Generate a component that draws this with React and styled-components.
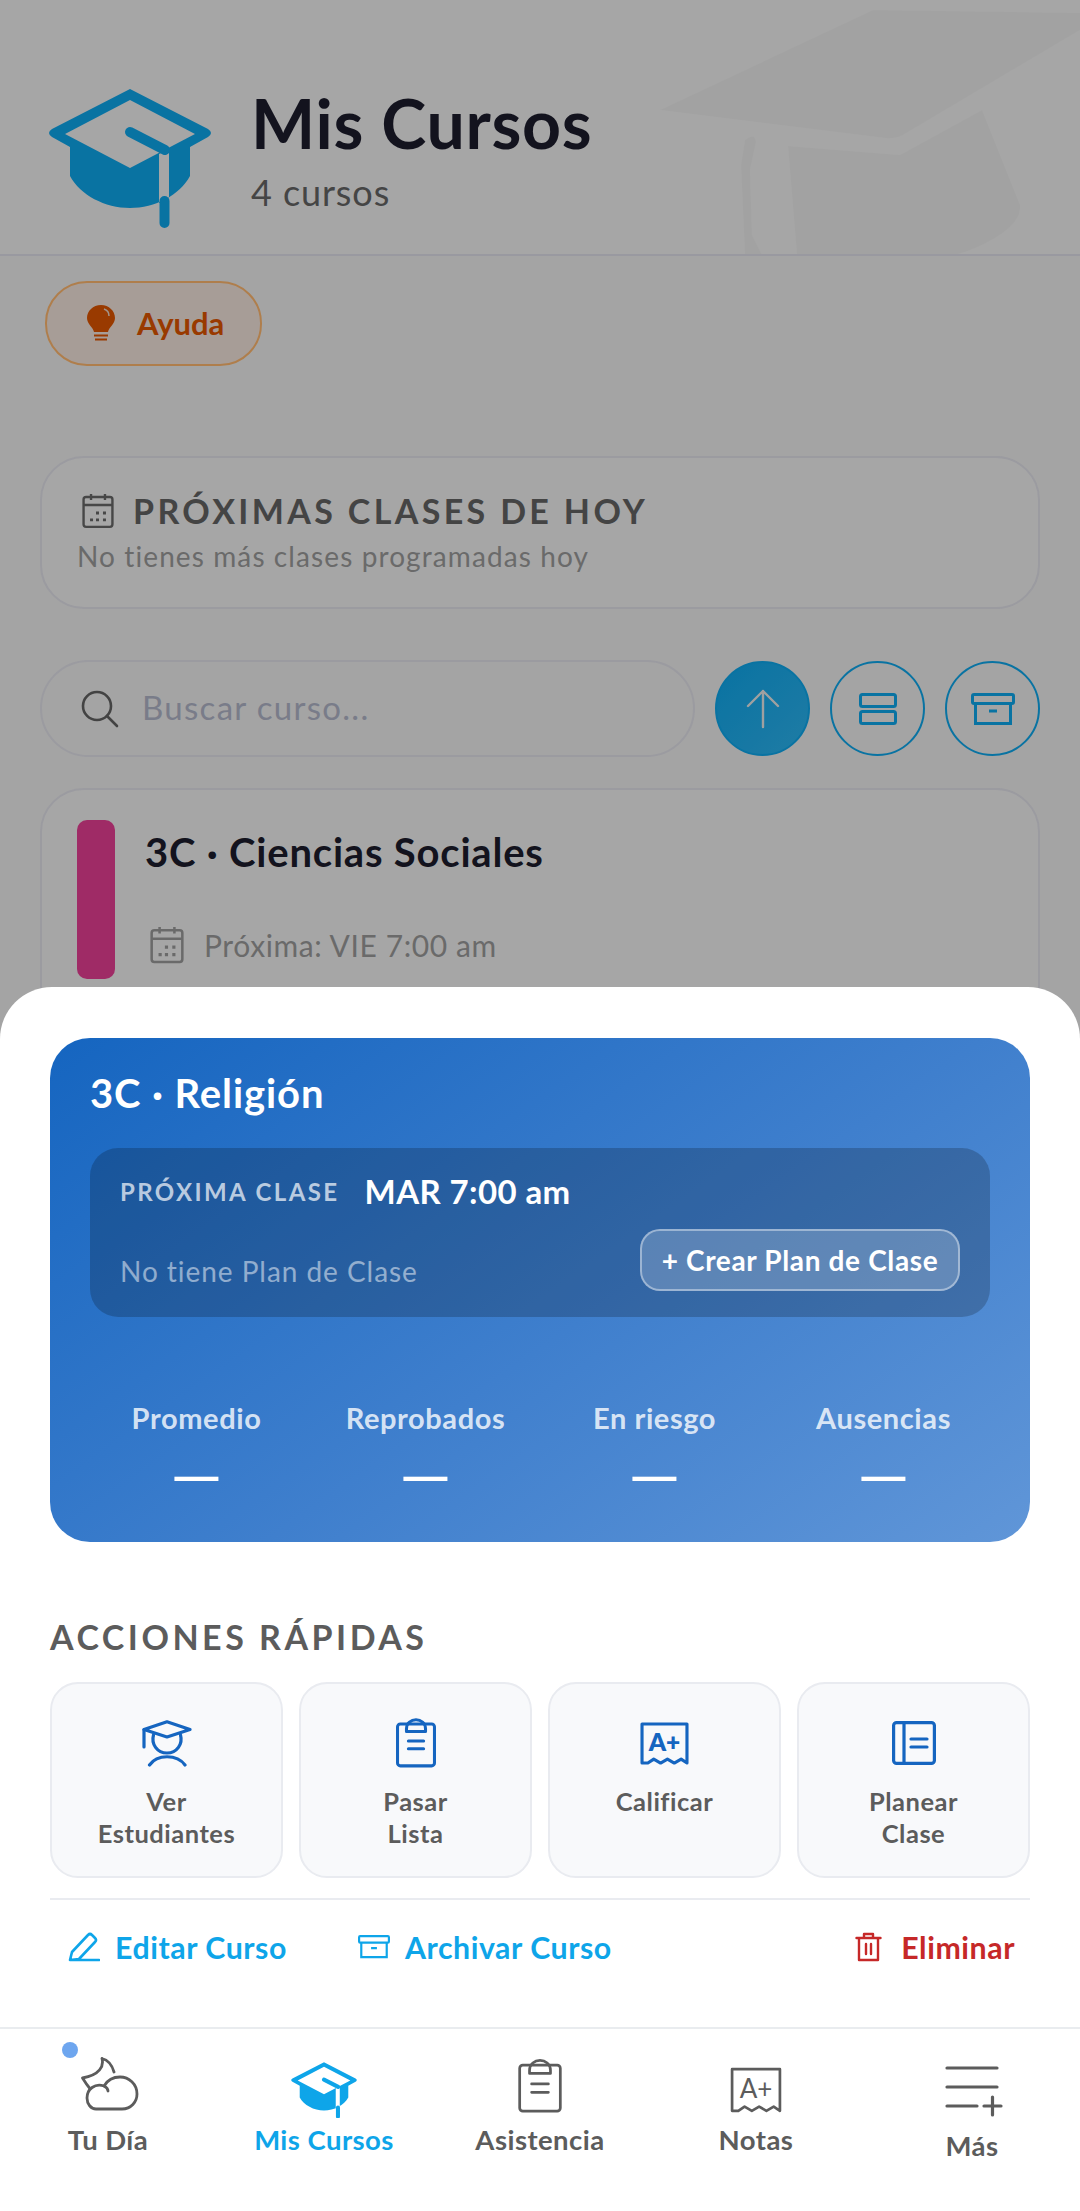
import React from "react";
import styled, { createGlobalStyle } from "styled-components";

const Global = createGlobalStyle`
  html, body { margin: 0; padding: 0; background: #ebebeb; }
  * { box-sizing: border-box; }
  body { font-family: Lato, "Noto Sans", "Open Sans", sans-serif; }
`;

const Screen = styled.div`
  position: relative;
  width: 1080px;
  height: 2211px;
  overflow: hidden;
  background: #ebebeb;
`;
const Header = styled.header`
  position: relative;
  height: 256px;
  display: flex;
  align-items: flex-start;
  gap: 37px;
  padding: 86px 0 0 46px;
  border-bottom: 2px solid #dcdce6;
  background: #eeeeee;
  overflow: hidden;
`;
const Watermark = styled.svg`
  position: absolute;
  top: 0;
  left: 640px;
  width: 440px;
  height: 255px;
`;
const HeaderText = styled.div`
  margin-top: -3px;
  display: flex;
  flex-direction: column;
  gap: 4px;
`;
const Title = styled.h1`
  margin: 0;
  font-size: 68px;
  line-height: 80px;
  font-weight: 700;
  color: #1c1c2c;
  letter-spacing: 0.7px;
`;
const Subtitle = styled.div`
  font-size: 36px;
  line-height: 50px;
  color: #636363;
  letter-spacing: 0.9px;
`;
const Body = styled.main`
  padding: 25px 40px 0;
  display: flex;
  flex-direction: column;
  align-items: stretch;
`;
const HelpButton = styled.button`
  align-self: flex-start;
  margin-left: 5px;
  width: 217px;
  height: 85px;
  display: flex;
  align-items: center;
  gap: 22px;
  padding: 0 0 2px 40px;
  border: 2px solid #fbb56d;
  border-radius: 42px;
  background: #efe1d9;
  color: #dc5400;
  font: 700 31px Lato, sans-serif;
`;
const Card = styled.section`
  border: 2px solid #dedee6;
  border-radius: 44px;
  background: #eeeeee;
`;
const UpcomingCard = styled(Card)`
  margin-top: 90px;
  height: 153px;
  padding: 31px 0 0 35px;
`;
const UpcomingHead = styled.div`
  display: flex;
  align-items: center;
  gap: 19px;
  padding-left: 5px;
  color: #666;
`;
const UpcomingTitle = styled.h2`
  margin: 0;
  font-size: 34px;
  line-height: 44px;
  font-weight: 700;
  letter-spacing: 3.35px;
  color: #626262;
`;
const Muted = styled.div`
  margin-top: 5px;
  font-size: 28px;
  line-height: 36px;
  color: #999;
  letter-spacing: 1.1px;
`;
const Tools = styled.div`
  margin-top: 51px;
  display: flex;
  align-items: center;
  gap: 20px;
`;
const Search = styled.div`
  width: 655px;
  height: 97px;
  display: flex;
  align-items: center;
  gap: 23px;
  padding-left: 39px;
  border: 2px solid #dedee6;
  border-radius: 49px;
  color: #606060;
`;
const Placeholder = styled.span`
  padding-bottom: 4px;
  font-size: 33px;
  color: #aeb2c5;
  letter-spacing: 1.3px;
`;
const RoundButton = styled.button`
  width: 95px;
  height: 95px;
  flex: none;
  display: flex;
  align-items: center;
  justify-content: center;
  padding: 0;
  border-radius: 50%;
  border: 2px solid #0ea5e9;
  background: ${(p) => (p.$filled ? "linear-gradient(135deg,#0ea5e9,#2db2ec)" : "transparent")};
  color: ${(p) => (p.$filled ? "#e6e6e6" : "#0ea5e9")};
`;
const CourseCard = styled(Card)`
  margin-top: 31px;
  height: 260px;
  padding: 30px 35px;
  display: flex;
  gap: 30px;
  align-items: flex-start;
`;
const Stripe = styled.div`
  width: 38px;
  height: 159px;
  flex: none;
  border-radius: 10px;
  background: #e43e92;
`;
const CourseBody = styled.div`
  display: flex;
  flex-direction: column;
  padding-top: 8px;
`;
const CourseName = styled.div`
  font-size: 40px;
  line-height: 48px;
  font-weight: 700;
  color: #1c1c2c;
  letter-spacing: 0.8px;
`;
const CourseMeta = styled.div`
  margin-top: 50px;
  margin-left: 5px;
  display: flex;
  align-items: center;
  gap: 20px;
  font-size: 30px;
  color: #999;
  letter-spacing: 0.6px;
`;
const Scrim = styled.div`
  position: absolute;
  inset: 0;
  background: rgba(0, 0, 0, 0.3);
`;
const Dock = styled.div`
  position: absolute;
  left: 0;
  right: 0;
  bottom: 0;
  display: flex;
  flex-direction: column;
  background: #fff;
  border-radius: 52px 52px 0 0;
`;
const Sheet = styled.div`
  height: 1040px;
  padding: 51px 50px 0;
  display: flex;
  flex-direction: column;
`;
const Hero = styled.div`
  height: 504px;
  padding: 30px 40px 0;
  border-radius: 40px;
  color: #fff;
  background: linear-gradient(145deg, #1565c0 0%, #3f7fcd 55%, #6096d8 100%);
`;
const HeroTitle = styled.div`
  font-size: 40px;
  line-height: 50px;
  font-weight: 700;
  letter-spacing: 0.9px;
`;
const NextBox = styled.div`
  margin-top: 30px;
  height: 169px;
  padding: 22px 30px 25px;
  border-radius: 28px;
  background: rgba(0, 0, 0, 0.2);
`;
const NextRow = styled.div`
  display: flex;
  align-items: center;
  gap: 25px;
  height: 42px;
`;
const NextLabel = styled.span`
  font-size: 24px;
  font-weight: 700;
  letter-spacing: 2.4px;
  color: rgba(255, 255, 255, 0.7);
`;
const NextValue = styled.span`
  font-size: 33px;
  font-weight: 700;
  letter-spacing: 0.4px;
`;
const PlanRow = styled.div`
  margin-top: 17px;
  display: flex;
  justify-content: space-between;
  align-items: flex-end;
`;
const NoPlan = styled.span`
  font-size: 28px;
  line-height: 40px;
  color: rgba(255, 255, 255, 0.5);
  letter-spacing: 0.95px;
`;
const PlanButton = styled.button`
  width: 320px;
  height: 62px;
  padding: 0 0 1px;
  border-radius: 20px;
  border: 2px solid rgba(255, 255, 255, 0.4);
  background: rgba(255, 255, 255, 0.2);
  color: #fff;
  font: 700 28px Lato, sans-serif;
  letter-spacing: 0.65px;
`;
const Stats = styled.div`
  margin-top: 81px;
  display: grid;
  grid-template-columns: repeat(4, 1fr);
  gap: 16px;
  text-align: center;
`;
const StatLabel = styled.div`
  font-size: 29px;
  line-height: 40px;
  font-weight: 700;
  color: rgba(255, 255, 255, 0.8);
  letter-spacing: 0.6px;
`;
const StatValue = styled.div`
  margin-top: 15px;
  font-size: 66px;
  line-height: 40px;
  font-weight: 400;
`;
const SectionTitle = styled.h3`
  margin: 73px 0 0;
  font-size: 34px;
  line-height: 44px;
  font-weight: 700;
  letter-spacing: 3.5px;
  color: #5c5c5c;
`;
const ActionGrid = styled.div`
  margin-top: 23px;
  display: grid;
  grid-template-columns: repeat(4, 1fr);
  gap: 16px;
`;
const ActionCard = styled.button`
  height: 196px;
  padding: 34px 10px 0;
  display: flex;
  flex-direction: column;
  align-items: center;
  border: 2px solid #e9ebf0;
  border-radius: 28px;
  background: #f8f9fb;
  color: #1565c0;
`;
const ActionIcon = styled.div`
  height: 50px;
  margin-bottom: 17px;
  display: flex;
  align-items: center;
  justify-content: center;
`;
const ActionLabel = styled.span`
  font: 700 25.5px/32px Lato, sans-serif;
  color: #5c5c5c;
  letter-spacing: 0.5px;
  white-space: pre-line;
`;
const Divider = styled.hr`
  margin: 20px 0 0;
  border: 0;
  height: 2px;
  background: #e9ebf0;
`;
const LinkRow = styled.div`
  margin-top: 25px;
  padding: 0 15px 0 18px;
  display: flex;
  align-items: center;
  gap: 71px;
`;
const LinkAction = styled.button`
  height: 44px;
  display: flex;
  align-items: center;
  gap: ${(p) => p.$gap || 15}px;
  margin-left: ${(p) => (p.$end ? "auto" : "0")};
  padding: 0;
  border: 0;
  background: none;
  color: ${(p) => p.$color};
  font: 700 30.3px Lato, sans-serif;
  letter-spacing: 0.55px;
`;
const Nav = styled.nav`
  height: 184px;
  padding-top: 28px;
  display: grid;
  grid-template-columns: repeat(5, 216px);
  border-top: 2px solid #e9ecef;
  background: #fff;
`;
const NavItem = styled.div`
  position: relative;
  display: flex;
  flex-direction: column;
  align-items: center;
  color: ${(p) => (p.$active ? "#0ea5e9" : "#5c5c5c")};
`;
const NavIcon = styled.div`
  height: ${(p) => p.$h || 65}px;
  display: flex;
  align-items: ${(p) => p.$align || "center"};
  justify-content: center;
  padding-left: ${(p) => p.$shift || 0}px;
`;
const NavLabel = styled.span`
  font-size: 27.5px;
  line-height: 36px;
  font-weight: 700;
  letter-spacing: 0.45px;
`;
const Dot = styled.span`
  position: absolute;
  top: -15px;
  left: 62px;
  width: 16px;
  height: 16px;
  border-radius: 50%;
  background: #6ea6ef;
`;

const CapIcon = ({ w, color }) => (
  <svg width={w} height={(w * 143) / 168} viewBox="16 16 168 143" fill={color}>
    <path
      fillRule="evenodd"
      d="M100 19 L178 59 Q184 63 178 67 L160 77 V106 C150 125 125 138 100 138 C75 138 50 125 40 106 V77 L22 67 Q16 63 22 59 Z M100 30 L35 64 L100 98 L165 64 Z M129 84 L139 79 V128 L129 133 Z"
    />
    <path d="M100 62 L135 80 M134.500 131 V153" stroke={color} strokeWidth="10" strokeLinecap="round" fill="none" />
  </svg>
);
const CalendarIcon = ({ size = 32 }) => (
  <svg width={size} height={size * 1.12} viewBox="0 0 32 36" fill="none" stroke="currentColor" strokeWidth="2.4">
    <rect x="1.500" y="4" width="29" height="30" rx="2.500" />
    <path d="M1.500 12 H30.500 M9 1 V7 M23 1 V7" />
    <path d="M14 20h3M21 20h3M8 27h3M14 27h3M21 27h3" strokeWidth="3" />
  </svg>
);
const SearchIcon = () => (
  <svg width="38" height="38" viewBox="0 0 38 38" fill="none" stroke="currentColor" strokeWidth="2.600" strokeLinecap="round">
    <circle cx="16" cy="16" r="14" />
    <path d="M26 26 L36 36" />
  </svg>
);
const ArrowUp = () => (
  <svg width="34" height="40" viewBox="0 0 34 40" fill="none" stroke="currentColor" strokeWidth="2.400" strokeLinecap="round" strokeLinejoin="round">
    <path d="M17 38 V2 M2 17 L17 2 L32 17" />
  </svg>
);
const RowsIcon = () => (
  <svg width="38" height="32" viewBox="0 0 38 32" fill="none" stroke="currentColor" strokeWidth="3">
    <rect x="1.500" y="1.500" width="35" height="12" rx="2" />
    <rect x="1.500" y="18.500" width="35" height="12" rx="2" />
  </svg>
);
const ArchiveIcon = ({ w = 44, sw = 3 }) => (
  <svg width={w} height={(w * 32) / 44} viewBox="0 0 44 32" fill="none" stroke="currentColor" strokeWidth={sw}>
    <rect x="1.500" y="1.500" width="41" height="9" rx="1.500" />
    <path d="M4.500 10.500 V30.500 H39.500 V10.500 M18 18 H26" />
  </svg>
);
const BulbIcon = () => (
  <svg width="28" height="36" viewBox="0 0 28 36" fill="currentColor">
    <path d="M14 0 C22 0 28 6 28 13 C28 19 22 22 21 27 H7 C6 22 0 19 0 13 C0 6 6 0 14 0 Z" />
    <path d="M7 29.500 H21 V31.500 H7 Z M8 33.500 H20 V35.500 H8 Z" />
    <path d="M17 4 C20 5 22 8 22 11" stroke="#e8d5c8" strokeWidth="1.500" fill="none" />
  </svg>
);
const StudentIcon = () => (
  <svg width="50" height="47" viewBox="0 0 50 47" fill="none" stroke="currentColor" strokeWidth="3.200" strokeLinecap="round" strokeLinejoin="round">
    <path d="M25 1.800 L48 9.500 L25 17 L2 9.500 Z" />
    <path d="M2 9.500 V27 M11.500 15 C9 24 15 33 25 33 C35 33 41 24 38.500 15" />
    <path d="M7.500 45 C15 34 35 34 43 45" />
  </svg>
);
const ClipboardIcon = ({ w = 40, h = 50, sw = 3.2 }) => (
  <svg width={w} height={h} viewBox="0 0 42 52" fill="none" stroke="currentColor" strokeWidth={sw} strokeLinecap="round" strokeLinejoin="round">
    <rect x="1.600" y="6" width="38.800" height="44" rx="3" />
    <path d="M11 14 H31 V11 C31 5 26 1.600 21 1.600 C16 1.600 11 5 11 11 Z" />
    <path d="M13 24 H29 M13 32 H29" />
  </svg>
);
const GradeIcon = ({ w = 49, h = 43, sw = 3.2, weight = 800 }) => (
  <svg width={w} height={h} viewBox="0 0 50 44" fill="none" stroke="currentColor" strokeWidth={sw} strokeLinecap="round" strokeLinejoin="round">
    <path d="M2 42 V2 H48 V42 L42 38 L35 42 L28 38 L21 42 L14 38 L8 42 Z" />
    <text x="25" y="30" textAnchor="middle" fontFamily="Lato, sans-serif" fontWeight={weight} fontSize="25" fill="currentColor" stroke="none">A+</text>
  </svg>
);
const BookIcon = () => (
  <svg width="44" height="44" viewBox="0 0 44 44" fill="none" stroke="currentColor" strokeWidth="3.200" strokeLinecap="round" strokeLinejoin="round">
    <rect x="1.600" y="1.600" width="40.800" height="40.800" rx="3" />
    <path d="M12 2 V42 M19 18 H35 M19 26 H35" />
  </svg>
);
const PencilIcon = () => (
  <svg width="32" height="30" viewBox="0 0 32 30" fill="none" stroke="currentColor" strokeWidth="2.600" strokeLinecap="round" strokeLinejoin="round">
    <path d="M2 28 L4 20 L20 3 Q22 1 24 3 L27 6 Q29 8 27 10 L11 27 Z M2 28 H31" />
  </svg>
);
const TrashIcon = () => (
  <svg width="27" height="30" viewBox="0 0 27 30" fill="none" stroke="currentColor" strokeWidth="2.400" strokeLinecap="round" strokeLinejoin="round">
    <path d="M1.500 6 H25.500 M9 6 V2 H18 V6 M4 6 V28 H23 V6 M11 12 V22 M16 12 V22" />
  </svg>
);
const MoonCloudIcon = () => (
  <svg width="58" height="54" viewBox="0 0 58 54" fill="none" stroke="currentColor" strokeWidth="2.800" strokeLinecap="round" strokeLinejoin="round">
    <path d="M21 1.500 C23 9 19 18 1.500 21 C4 25 6 28 8.500 31 M21 1.500 C27 3 31 8 33 15" />
    <path d="M15 52 H41 C50 52 56 45 56 37 C56 27 48 20 39 20 C32 20 26 24 23 29 C14 26 6 32 6 41 C6 47 10 52 15 52 Z" />
    <path d="M23 29 C25 30 27 32 27 34" />
  </svg>
);
const MoreIcon = () => (
  <svg width="58" height="56" viewBox="0 0 58 56" fill="none" stroke="currentColor" strokeWidth="3.200" strokeLinecap="round">
    <path d="M2 3 H52 M2 22 H52 M2 41 H32 M39 41 H56 M47.500 32 V50" />
  </svg>
);

const actions = [
  { icon: <StudentIcon />, label: "Ver\nEstudiantes" },
  { icon: <ClipboardIcon />, label: "Pasar\nLista" },
  { icon: <GradeIcon />, label: "Calificar" },
  { icon: <BookIcon />, label: "Planear\nClase" },
];
const stats = ["Promedio", "Reprobados", "En riesgo", "Ausencias"];

export default function App() {
  return (
    <Screen>
      <Global />
      <Header>
        <Watermark viewBox="640 0 440 255" fill="#000" fillOpacity="0.02">
          <path d="M660 110 L873 10 L1080 13 V30 L903 135 Q895 139 885 138 Z" />
          <path d="M788 146 L900 155 L982 110 L1020 205 Q1022 222 995 238 Q975 250 955 255 H797 Z" />
          <path d="M745 140 Q755 132 756 142 L750 170 L752 235 L762 255 H745 L741 165 Z" />
        </Watermark>
        <CapIcon w={168} color="#0ea5e9" />
        <HeaderText>
          <Title>Mis Cursos</Title>
          <Subtitle>4 cursos</Subtitle>
        </HeaderText>
      </Header>
      <Body>
        <HelpButton>
          <BulbIcon />
          Ayuda
        </HelpButton>
        <UpcomingCard>
          <UpcomingHead>
            <CalendarIcon />
            <UpcomingTitle>PRÓXIMAS CLASES DE HOY</UpcomingTitle>
          </UpcomingHead>
          <Muted>No tienes más clases programadas hoy</Muted>
        </UpcomingCard>
        <Tools>
          <Search>
            <SearchIcon />
            <Placeholder>Buscar curso...</Placeholder>
          </Search>
          <RoundButton $filled>
            <ArrowUp />
          </RoundButton>
          <RoundButton>
            <RowsIcon />
          </RoundButton>
          <RoundButton>
            <ArchiveIcon />
          </RoundButton>
        </Tools>
        <CourseCard>
          <Stripe />
          <CourseBody>
            <CourseName>3C · Ciencias Sociales</CourseName>
            <CourseMeta>
              <CalendarIcon size={34} />
              Próxima: VIE 7:00 am
            </CourseMeta>
          </CourseBody>
        </CourseCard>
      </Body>
      <Scrim />
      <Dock>
        <Sheet>
          <Hero>
            <HeroTitle>3C · Religión</HeroTitle>
            <NextBox>
              <NextRow>
                <NextLabel>PRÓXIMA CLASE</NextLabel>
                <NextValue>MAR 7:00 am</NextValue>
              </NextRow>
              <PlanRow>
                <NoPlan>No tiene Plan de Clase</NoPlan>
                <PlanButton>+ Crear Plan de Clase</PlanButton>
              </PlanRow>
            </NextBox>
            <Stats>
              {stats.map((s) => (
                <div key={s}>
                  <StatLabel>{s}</StatLabel>
                  <StatValue>—</StatValue>
                </div>
              ))}
            </Stats>
          </Hero>
          <SectionTitle>ACCIONES RÁPIDAS</SectionTitle>
          <ActionGrid>
            {actions.map((a) => (
              <ActionCard key={a.label}>
                <ActionIcon>{a.icon}</ActionIcon>
                <ActionLabel>{a.label}</ActionLabel>
              </ActionCard>
            ))}
          </ActionGrid>
          <Divider />
          <LinkRow>
            <LinkAction $color="#0ea5e9">
              <PencilIcon />
              Editar Curso
            </LinkAction>
            <LinkAction $color="#0ea5e9">
              <ArchiveIcon w={32} sw={3} />
              Archivar Curso
            </LinkAction>
            <LinkAction $color="#c62828" $end $gap={19}>
              <TrashIcon />
              Eliminar
            </LinkAction>
          </LinkRow>
        </Sheet>
        <Nav>
          <NavItem>
            <Dot />
            <NavIcon $align="flex-start" $shift={3}>
              <MoonCloudIcon />
            </NavIcon>
            <NavLabel>Tu Día</NavLabel>
          </NavItem>
          <NavItem $active>
            <NavIcon>
              <CapIcon w={68} color="#0ea5e9" />
            </NavIcon>
            <NavLabel>Mis Cursos</NavLabel>
          </NavItem>
          <NavItem>
            <NavIcon $align="flex-start">
              <ClipboardIcon w={44} h={58} sw={2.6} />
            </NavIcon>
            <NavLabel>Asistencia</NavLabel>
          </NavItem>
          <NavItem>
            <NavIcon>
              <GradeIcon w={52} h={52} sw={2.6} weight={400} />
            </NavIcon>
            <NavLabel>Notas</NavLabel>
          </NavItem>
          <NavItem>
            <NavIcon $h={71} $shift={3}>
              <MoreIcon />
            </NavIcon>
            <NavLabel>Más</NavLabel>
          </NavItem>
        </Nav>
      </Dock>
    </Screen>
  );
}
